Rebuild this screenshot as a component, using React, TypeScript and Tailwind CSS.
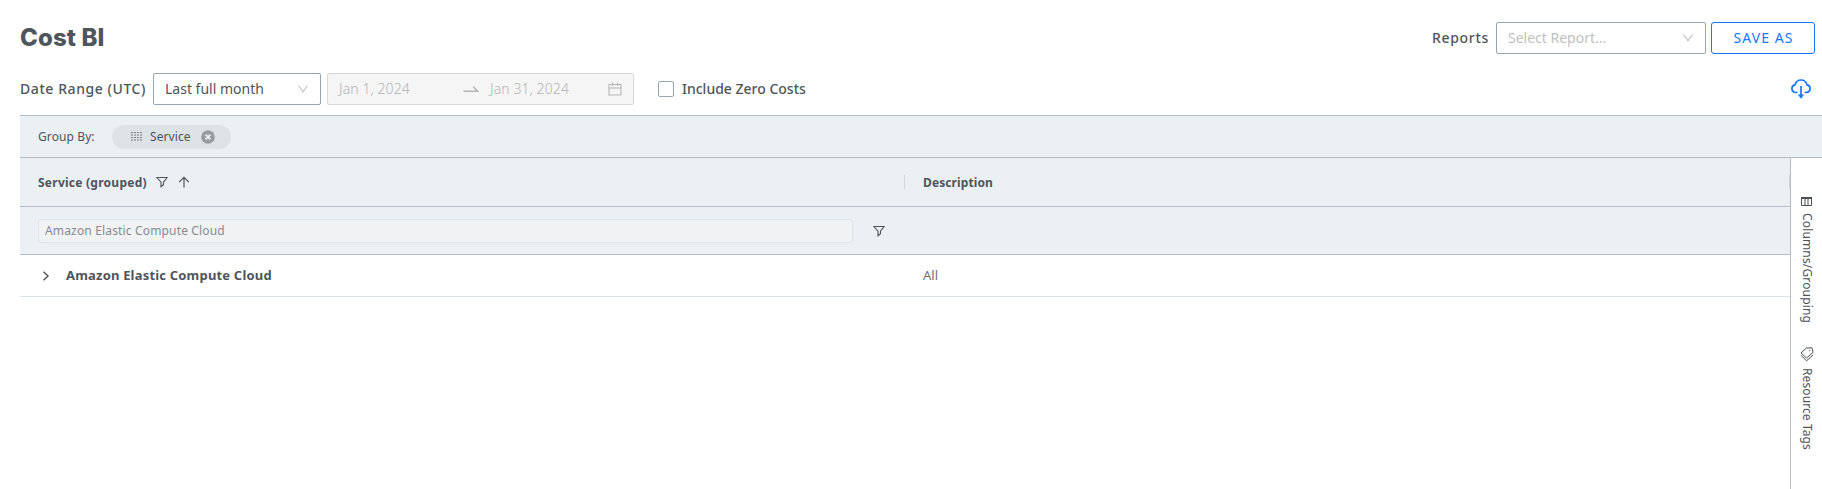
import React from 'react';

function FilterIcon({ className }: { className: string }) {
  return (
    <svg viewBox="0 0 12 12" className={className} fill="none" stroke="currentColor" strokeWidth="1.1">
      <path d="M.9 1.500h10.200L7.500 6.200v2.600L5 10.800V6.200z" />
    </svg>
  );
}

function DownIcon() {
  return (
    <svg viewBox="0 0 12 12" className="h-3 w-3" fill="none" stroke="#bfbfbf" strokeWidth="1.1">
      <path d="M1.500 2.500L6 8.700l4.500-6.200" />
    </svg>
  );
}

function ArrowUpIcon({ className }: { className: string }) {
  return (
    <svg viewBox="0 0 12 12" className={className} fill="none" stroke="currentColor" strokeWidth="1.2">
      <path d="M6 11.500V1.500M1.200 6.200L6 1.300l4.800 4.900" />
    </svg>
  );
}

function RangeArrowIcon({ className }: { className: string }) {
  return (
    <svg viewBox="0 0 16 16" className={className} fill="none" stroke="currentColor" strokeWidth="1.5">
      <path d="M.5 10.300h14.200L10.200 5.800" />
    </svg>
  );
}

function CalendarIcon({ className }: { className: string }) {
  return (
    <svg viewBox="0 0 14 14" className={className} fill="none" stroke="currentColor" strokeWidth="1.1">
      <path d="M1 2.500h12v10.500H1zM1 6h12M4.500 .5v3.500M9.500 .5v3.500" />
    </svg>
  );
}

function CloudDownloadIcon({ className }: { className: string }) {
  return (
    <svg viewBox="0 0 20 20" className={className} fill="none" stroke="currentColor" strokeWidth="1.7">
      <path d="M6.500 13.500H5.200C2.700 13.500 .9 11.900 .9 9.600c0-1.900 1.300-3.300 3-3.700C4.700 3 7 1 10 1s5.300 2 6.100 4.900c1.700.4 3 1.800 3 3.700 0 2.300-1.800 3.900-4.300 3.900h-1.300" />
      <path d="M10 7v11" />
      <path d="M6.800 15.500h6.400L10 19.700z" fill="currentColor" stroke="none" />
    </svg>
  );
}

function DragIcon() {
  const columns = [0, 3, 6, 9];
  const rows = [0, 2.5, 5, 7.5];
  return (
    <svg viewBox="0 0 11 9" className="h-[9px] w-[11px]" fill="#7d848a">
      {columns.map((x) => rows.map((y) => <rect key={`${x}-${y}`} x={x} y={y} width="1.9" height="1.1" />))}
    </svg>
  );
}

function ClearIcon() {
  return (
    <svg viewBox="0 0 14 14" className="h-[14px] w-[14px]">
      <circle cx="7" cy="7" r="6.8" fill="#969ca0" />
      <path d="M4.600 4.600l4.800 4.800M9.400 4.600L4.600 9.400" stroke="#eef1f3" strokeWidth="1.9" />
    </svg>
  );
}

function ColumnsIcon() {
  return (
    <svg viewBox="0 0 11 9" className="h-[9px] w-[11px]" fill="none" stroke="#4a5056" strokeWidth="1">
      <path d="M0 1h11" strokeWidth="2" />
      <path d="M.5 1v7.500h10V1M4 1v7M7 1v7" />
    </svg>
  );
}

function TagsIcon() {
  return (
    <svg viewBox="0 0 14 15" className="h-[15px] w-[14px] shrink-0" fill="none" stroke="#4a5056" strokeWidth="1" strokeLinejoin="round">
      <path d="M6.500 1L12 .8l1 4.700-6.500 5.500L1 6z" />
      <path d="M1 8.300l5.500 5.500L13 8" />
      <circle cx="9.700" cy="3.700" r=".6" fill="#4a5056" stroke="none" />
    </svg>
  );
}

export default function App() {
  return (
    <div className="flex h-[489px] w-full flex-col overflow-hidden bg-white pl-5 font-['Noto_Sans',sans-serif] text-[14px] text-[#4e555b]">
      <header className="flex h-[54px] items-end justify-between pr-[7px]">
        <h1 className="h-8 font-['Inter',sans-serif] text-[24px] leading-[31px] font-extrabold tracking-[0.1px] whitespace-nowrap">Cost BI</h1>
        <div className="flex h-8 items-center">
          <span className="mr-[7px] pb-0.5 font-medium tracking-[0.7px]">Reports</span>
          <div className="mr-[5px] flex h-8 w-[210px] items-center justify-between rounded-[2px] border border-[#94a8b3] px-[11px] text-[#bfbfbf]">
            <span className="pb-0.5">Select Report...</span>
            <DownIcon />
          </div>
          <button className="h-8 w-[104px] rounded-[3px] border border-[#1677ff] pb-0.5 pl-px tracking-[1.1px] text-[#1677ff]">SAVE AS</button>
        </div>
      </header>

      <div className="mt-[19px] flex h-8 items-center">
        <span className="w-[133px] pb-px font-medium tracking-[0.57px] whitespace-nowrap">Date Range (UTC)</span>
        <div className="flex h-8 w-[168px] items-center justify-between rounded-[2px] border border-[#94a8b3] px-[11px]">
          <span className="pb-px">Last full month</span>
          <DownIcon />
        </div>
        <div className="ml-[6px] flex h-8 w-[307px] items-center rounded-[2px] border border-[#d9d9d9] bg-[#f5f5f5] px-[11px] font-light tracking-[0.1px] text-[#b4b4b4]">
          <span className="w-[124px] pb-px">Jan 1, 2024</span>
          <RangeArrowIcon className="mr-[11px] h-4 w-4" />
          <span className="pb-px">Jan 31, 2024</span>
          <CalendarIcon className="ml-auto h-[14px] w-[14px]" />
        </div>
        <span className="ml-6 h-4 w-4 rounded-[2px] border border-[#94a8b3]" />
        <span className="ml-2 pb-px font-medium">Include Zero Costs</span>
        <CloudDownloadIcon className="mr-[11px] ml-auto h-5 w-5 text-[#1677ff]" />
      </div>

      <div className="mt-[10px] flex h-[43px] shrink-0 items-center border-y border-[#b5bdc6] bg-[#eaf0f3] pl-[18px] text-[12px] tracking-[0.1px]">
        <span className="w-[74px] pt-px">Group By:</span>
        <div className="flex h-6 w-[119px] items-center rounded-full bg-[#dde2e6] pl-[19px]">
          <DragIcon />
          <span className="ml-2 w-[51px] pt-px">Service</span>
          <ClearIcon />
        </div>
      </div>

      <div className="flex min-h-0 flex-1">
        <main className="w-[1770px] shrink-0 text-[12px]">
          <div className="flex h-[49px] items-center border-b border-[#b5bdc6] bg-[#eaf0f3] pl-[18px] font-bold">
            <div className="flex w-[866px] items-center">
              <span className="pt-0.5 tracking-[0.25px]">Service (grouped)</span>
              <FilterIcon className="ml-[9px] h-3 w-3" />
              <ArrowUpIcon className="ml-[10px] h-3 w-3" />
            </div>
            <span className="h-[14px] w-px bg-[#d0d6db]" />
            <span className="ml-[18px] pt-0.5 tracking-[0.1px]">Description</span>
            <span className="ml-auto h-[14px] w-px bg-[#d0d6db]" />
          </div>
          <div className="flex h-12 items-center border-b border-[#b5bdc6] bg-[#eaf0f3] pl-[18px]">
            <div className="flex h-6 w-[815px] items-center rounded-[3px] border border-[#e0e4e8] bg-[#f0f2f4] pt-px pl-[6px] tracking-[0.16px] text-[#868b90]">
              Amazon Elastic Compute Cloud
            </div>
            <FilterIcon className="ml-[20px] h-3 w-3" />
          </div>
          <div className="flex h-[42px] items-center border-b border-[#dde2eb] pl-[22px]">
            <svg viewBox="0 0 8 10" className="h-[10px] w-2" fill="none" stroke="currentColor" strokeWidth="1.4">
              <path d="M1.500 .8L6 5l-4.500 4.200" />
            </svg>
            <span className="ml-4 w-[857px] pt-px text-[13px] font-bold tracking-[0.19px]">Amazon Elastic Compute Cloud</span>
            <span className="pt-px text-[13px] text-[#6b7278]">All</span>
          </div>
        </main>
        <aside className="flex flex-1 flex-col items-center border-l border-[#b5bdc6] pt-[39px] text-[12px]">
          <ColumnsIcon />
          <span className="mt-[7px] h-[134px] shrink-0 leading-4 tracking-[0.15px] [writing-mode:vertical-rl]">Columns/Grouping</span>
          <TagsIcon />
          <span className="mt-[6px] leading-4 tracking-[0.1px] [writing-mode:vertical-rl]">Resource Tags</span>
        </aside>
      </div>
    </div>
  );
}
